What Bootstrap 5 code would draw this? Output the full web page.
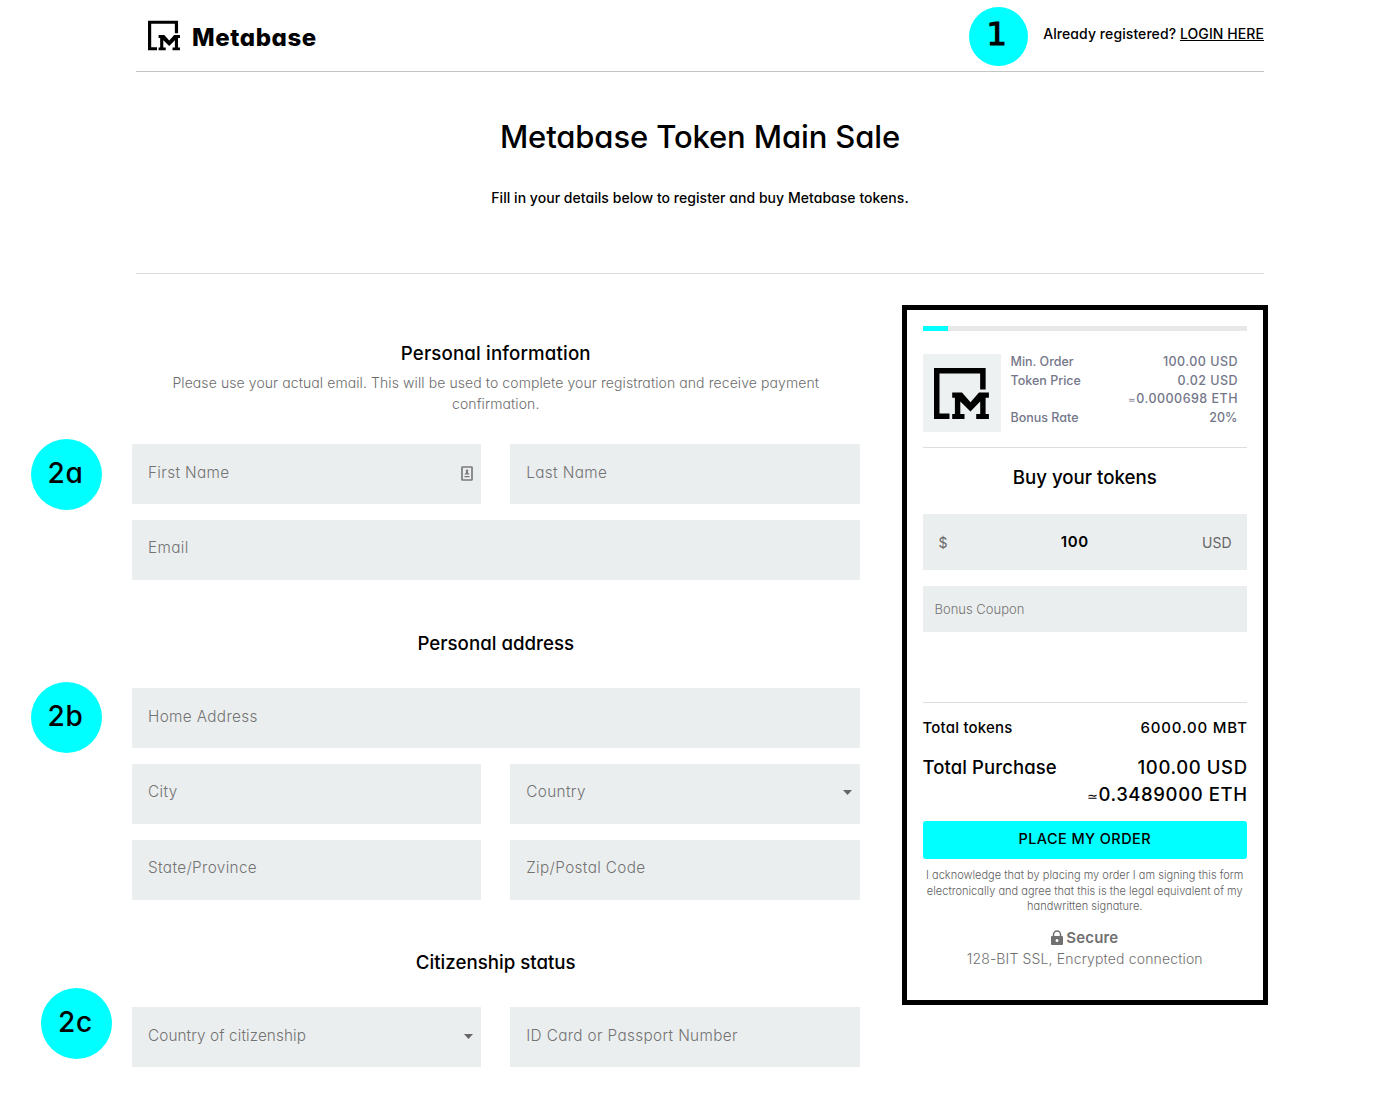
<!DOCTYPE html>
<html lang="en">
<head>
<meta charset="utf-8">
<meta name="viewport" content="width=device-width, initial-scale=1">
<title>Metabase Token Main Sale</title>
<link href="https://cdn.jsdelivr.net/npm/bootstrap@5.3.0/dist/css/bootstrap.min.css" rel="stylesheet">
<style>
body{font-family:Inter,"Open Sans",sans-serif;font-feature-settings:"cv11";color:#000;background:#fff;height:1100px;overflow:hidden}
.site-head,.intro{width:1128px}
.site-head{height:72px;border-bottom:1px solid #c4c4c4;padding-left:12px}
.brand-name{font-size:24px;font-weight:800;line-height:30px;letter-spacing:.6px;margin:4px 0 0 12px}
.login{font-size:14px;font-weight:500;letter-spacing:.08px;padding-bottom:5px}
.login a{color:#000}
.intro{height:202px;border-bottom:1px solid #dcdcdc}
.intro h1{font-size:31px;font-weight:500;line-height:40px;letter-spacing:-.12px;margin:45px 0 0}
.intro p{font-size:14px;font-weight:500;line-height:20px;letter-spacing:.04px;margin:31px 0 0}
.content{width:1136px}
.form-col{width:727.5px}
.form-col h2,.buy-title{font-size:18.7px;font-weight:500;line-height:24px;margin:0}
.form-col .title-first{margin-top:68px;letter-spacing:.15px}
.form-col .title-address{margin-top:52.4px}
.form-col .title-citizen{margin-top:51.3px}
.hint{font-size:14px;font-weight:350;line-height:20.5px;letter-spacing:.09px;color:#6c6c6c;width:680px;margin:7px auto 0}
.stack{gap:15.700px}
.stack-first{margin-top:30px}
.stack-next{margin-top:32.2px}
.pair{gap:29px}
.field{background:#ebeeef;height:60px;padding:0 8px 2px 16px;font-size:15.300px;font-weight:350;letter-spacing:.36px;color:#737373;flex:1 1 0}
.stack>.field{flex:0 0 60px}
.field-tight{letter-spacing:.1px}
.order{width:366px;height:700px;margin-top:31px;border:5px solid #000;padding:16px 16px 0 15.5px}
.meter{height:5px;border-radius:0;background:#e8e8e8}
.meter .progress-bar{background:#0ff}
.thumb{width:78px;height:78px;background:#eef1f2}
.facts{font-size:12.5px;font-weight:550;line-height:18.5px;color:#74778a;margin:-1px 0 0 10px;padding-right:9.500px}
.facts>div{height:18.500px}
.facts .value{letter-spacing:.48px;margin-right:-.48px}
.approx{font-size:.7em;line-height:1}
.rule{height:1px;background:#dcdfdf}
.amount{height:56px;background:#ebeeef;padding:0 15.500px 0 16px;font-size:14px;color:#666}
.amount b{color:#000;font-size:15px;font-weight:600;letter-spacing:.6px}
.coupon{height:46px;background:#ebeeef;padding:2px 0 0 12px;font-size:13px;font-weight:350;color:#737373}
.tokens{font-size:15px;font-weight:500;line-height:20px;letter-spacing:.2px}
.tokens .value{letter-spacing:.85px;margin-right:-.85px}
.purchase{font-size:18.5px;font-weight:500;line-height:27px;height:27px;letter-spacing:.1px}
.purchase .value{letter-spacing:.6px;margin-right:-.6px}
.order-btn{height:38px;background:#0ff;border:0;border-radius:3px;font-size:14.5px;font-weight:500;letter-spacing:.4px;padding:0 0 3px;color:#000}
.legal{font-size:11px;font-weight:350;line-height:15.6px;letter-spacing:.02px;color:#606060}
.secure{color:#707070;font-size:14px;font-weight:350;line-height:21px;letter-spacing:.15px}
.secure b{font-size:15px;font-weight:600;margin-left:-1px}
.secure svg{margin-bottom:-3px}
.secure svg,.secure b{vertical-align:baseline}
.pin{position:absolute;width:71px;height:71px;border-radius:50%;background:#0ff;font-size:28px;font-weight:550;line-height:69px;text-align:center;letter-spacing:.7px;padding-right:2px}
.pin-1{left:969px;top:7px;width:59px;height:59px;font:32px/54px "DejaVu Sans",sans-serif;-webkit-text-stroke:1.1px #000;padding-right:3px}
.pin-2a{left:31px;top:439px}
.pin-2b{left:31px;top:682px}
.pin-2c{left:41px;top:988px}
</style>
</head>
<body class="position-relative">
<svg class="d-none">
  <symbol id="mark-logo" viewBox="0 0 55 51">
    <path d="M48.900 21.500V2.750H2.750V48.250H15.500" fill="none" stroke="#000" stroke-width="5.500"/>
    <path d="M18.200 24.500H28L36.500 34.200 45 24.500H54.900V29.700H51.600V46H54.900V51H42.200V46H46.200V33.500L36.500 43.500 26.300 33.500V46H30.500V51H18.200V46H20.900V29.700H18.200z"/>
  </symbol>
</svg>

<header class="site-head mx-auto d-flex justify-content-between align-items-center">
  <div class="d-flex align-items-center">
    <svg width="32" height="31"><use href="#mark-logo"/></svg>
    <span class="brand-name">Metabase</span>
  </div>
  <div class="login">Already registered? <a href="#">LOGIN HERE</a></div>
</header>

<section class="intro mx-auto text-center overflow-hidden">
  <h1>Metabase Token Main Sale</h1>
  <p>Fill in your details below to register and buy Metabase tokens.</p>
</section>

<main class="content mx-auto d-flex justify-content-between align-items-start">
  <form class="form-col">
    <h2 class="title-first text-center">Personal information</h2>
    <p class="hint text-center">Please use your actual email. This will be used to complete your registration and receive payment confirmation.</p>
    <div class="stack stack-first d-flex flex-column">
      <div class="pair d-flex">
        <label class="field d-flex align-items-center justify-content-between">First Name
          <svg width="12" height="15" viewBox="0 0 12 15"><rect x="1" y="1" width="10" height="13" rx=".5" fill="none" stroke="#7b7b7b" stroke-width="1.700"/><circle cx="6" cy="4.700" r="1.300" fill="#777"/><path d="M3.500 8.600L6 5l2.500 3.600zM3.500 10h5v1.300h-5z" fill="#777"/></svg>
        </label>
        <label class="field d-flex align-items-center">Last Name</label>
      </div>
      <label class="field d-flex align-items-center">Email</label>
    </div>
    <h2 class="title-address text-center">Personal address</h2>
    <div class="stack stack-next d-flex flex-column">
      <label class="field d-flex align-items-center">Home Address</label>
      <div class="pair d-flex">
        <label class="field d-flex align-items-center">City</label>
        <label class="field d-flex align-items-center justify-content-between">Country<svg width="9" height="5"><path d="M0 0h9L4.500 5z" fill="#666"/></svg></label>
      </div>
      <div class="pair d-flex">
        <label class="field d-flex align-items-center">State/Province</label>
        <label class="field d-flex align-items-center">Zip/Postal Code</label>
      </div>
    </div>
    <h2 class="title-citizen text-center">Citizenship status</h2>
    <div class="stack-next pair d-flex">
      <label class="field field-tight d-flex align-items-center justify-content-between">Country of citizenship<svg width="9" height="5"><path d="M0 0h9L4.500 5z" fill="#666"/></svg></label>
      <label class="field d-flex align-items-center">ID Card or Passport Number</label>
    </div>
  </form>

  <aside class="order">
    <div class="progress meter"><div class="progress-bar" style="width:7.9%"></div></div>
    <div class="d-flex" style="margin-top:23px">
      <div class="thumb d-flex align-items-center justify-content-center"><svg width="55" height="51"><use href="#mark-logo"/></svg></div>
      <div class="facts flex-grow-1">
        <div class="d-flex justify-content-between"><span>Min. Order</span><span class="value">100.00 USD</span></div>
        <div class="d-flex justify-content-between"><span>Token Price</span><span class="value">0.02 USD</span></div>
        <div class="text-end"><span class="value"><span class="approx">≃</span>0.0000698 ETH</span></div>
        <div class="d-flex justify-content-between"><span>Bonus Rate</span><span>20%</span></div>
      </div>
    </div>
    <div class="rule" style="margin-top:15px"></div>
    <h2 class="buy-title text-center" style="margin-top:18px">Buy your tokens</h2>
    <div class="amount d-flex justify-content-between align-items-center" style="margin-top:24px"><span>$</span><b>100</b><span>USD</span></div>
    <div class="coupon d-flex align-items-center" style="margin-top:16px">Bonus Coupon</div>
    <div class="rule" style="margin-top:70px"></div>
    <div class="tokens d-flex justify-content-between" style="margin-top:15px"><span>Total tokens</span><span class="value">6000.00 MBT</span></div>
    <div class="purchase d-flex justify-content-between" style="margin-top:16px"><span>Total Purchase</span><span class="value">100.00 USD</span></div>
    <div class="purchase text-end"><span class="value"><span class="approx">≃</span>0.3489000 ETH</span></div>
    <button type="button" class="btn order-btn w-100 d-block" style="margin-top:13px">PLACE MY ORDER</button>
    <p class="legal text-center mb-0" style="margin-top:9px">I acknowledge that by placing my order I am signing this form<br>electronically and agree that this is the legal equivalent of my<br>handwritten signature.</p>
    <div class="secure text-center" style="margin-top:12px"><svg width="12" height="16"><path d="M2.500 6V4.500a3.500 3.500 0 0 1 7 0V6" fill="none" stroke="#707070" stroke-width="1.500"/><path fill-rule="evenodd" d="M1 6h10a1 1 0 0 1 1 1v7a1 1 0 0 1-1 1H1a1 1 0 0 1-1-1V7a1 1 0 0 1 1-1zm5 3a1.500 1.500 0 1 0 0 3 1.500 1.500 0 0 0 0-3z" fill="#707070"/></svg> <b>Secure</b><br>128-BIT SSL, Encrypted connection</div>
  </aside>
</main>

<div class="pin pin-1">1</div>
<div class="pin pin-2a">2a</div>
<div class="pin pin-2b">2b</div>
<div class="pin pin-2c">2c</div>
<script src="https://cdn.jsdelivr.net/npm/bootstrap@5.3.0/dist/js/bootstrap.bundle.min.js"></script>
</body>
</html>
